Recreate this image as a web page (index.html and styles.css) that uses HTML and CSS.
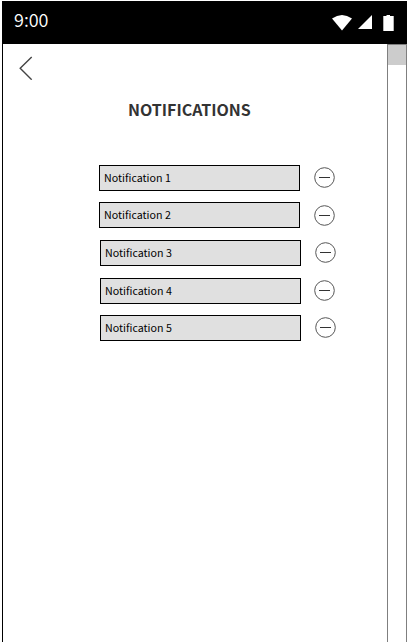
FILE: index.html
```html
<!DOCTYPE html>
<html lang="en">
<head>
<meta charset="utf-8">
<title>Notifications</title>
<link rel="stylesheet" href="styles.css">
</head>
<body>
<div class="phone">
  <header class="status">
    <span class="clock">9:00</span>
    <svg class="status-icons" width="64" height="18" viewBox="0 0 64 18" fill="#fff">
      <path d="M0 4.500Q10-2.500 20 4.500L10 16.500Z"/>
      <path d="M26 15L40 1V15Z"/>
      <path d="M54.500 1H58V2H61.700V17H51.300V2H54.500Z"/>
    </svg>
  </header>
  <div class="body">
    <main class="content">
      <a class="back" href="#" aria-label="Back"><svg width="14" height="24" viewBox="0 0 14 24" fill="none" stroke="#444" stroke-width="1.4"><path d="M12.700 1L1.200 12.300L12.700 23.700"/></svg></a>
      <h1 class="title">NOTIFICATIONS</h1>
      <ul class="list">
        <li class="row"><span class="item">Notification 1</span><svg class="remove" viewBox="0 0 21 21"><circle cx="10.500" cy="10.500" r="9.800"/><path d="M5 10.500H16"/></svg></li>
        <li class="row low"><span class="item">Notification 2</span><svg class="remove" viewBox="0 0 21 21"><circle cx="10.500" cy="10.500" r="9.800"/><path d="M5 10.500H16"/></svg></li>
        <li class="row shifted"><span class="item">Notification 3</span><svg class="remove" viewBox="0 0 21 21"><circle cx="10.500" cy="10.500" r="9.800"/><path d="M5 10.500H16"/></svg></li>
        <li class="row shifted near"><span class="item">Notification 4</span><svg class="remove" viewBox="0 0 21 21"><circle cx="10.500" cy="10.500" r="9.800"/><path d="M5 10.500H16"/></svg></li>
        <li class="row shifted"><span class="item">Notification 5</span><svg class="remove" viewBox="0 0 21 21"><circle cx="10.500" cy="10.500" r="9.800"/><path d="M5 10.500H16"/></svg></li>
      </ul>
    </main>
    <div class="scrollbar"><div class="thumb"></div></div>
  </div>
</div>
</body>
</html>
```
FILE: styles.css
```css
* { box-sizing: border-box; }
body {
  margin: 0;
  background: #fff;
  font-family: "Noto Sans CJK SC", "Noto Sans", sans-serif;
  overflow: hidden;
}
.phone {
  display: flex;
  flex-direction: column;
  height: 642px;
  padding: 1px 0 0 2px;
}
.status {
  display: flex;
  justify-content: space-between;
  flex: none;
  height: 43px;
  padding: 0 11px 0 12px;
  background: #000;
  color: #fff;
}
.clock {
  font-size: 18px;
  font-weight: 350;
  line-height: 37px;
}
.status-icons { margin-top: 13px; }
.body {
  display: flex;
  flex: 1;
  border-left: 1px solid #000;
}
.content {
  flex: 1;
  padding-top: 12px;
}
.back {
  display: block;
  width: 14px;
  height: 24px;
  margin-left: 16px;
}
.back svg { display: block; }
.title {
  margin: 16px 0 0 125px;
  color: #333;
  font-size: 16px;
  font-weight: 700;
  line-height: 26px;
  white-space: nowrap;
}
.list {
  display: grid;
  grid-template-rows: 37px 38px 38px 37px 26px;
  margin: 43px 0 0 96px;
  padding: 0;
  list-style: none;
}
.row {
  display: flex;
  align-items: flex-start;
  gap: 14px;
}
.shifted { margin-left: 1px; }
.item {
  width: 201px;
  height: 26px;
  padding-left: 4px;
  border: 1px solid #000;
  background: #e0e0e0;
  color: #000;
  font-size: 10.7px;
  line-height: 24px;
}
.remove {
  width: 21px;
  height: 21px;
  margin-top: 2px;
  fill: none;
  stroke: #555;
  stroke-width: 1;
}
.remove path { stroke: #333; }
.low .remove { margin-top: 3px; }
.near { gap: 13px; }
.scrollbar {
  width: 20px;
  border: solid #7f7f7f;
  border-width: 0 1px;
}
.thumb {
  height: 21px;
  border-top: 1px solid #7f7f7f;
  background: #ccc;
}
```
